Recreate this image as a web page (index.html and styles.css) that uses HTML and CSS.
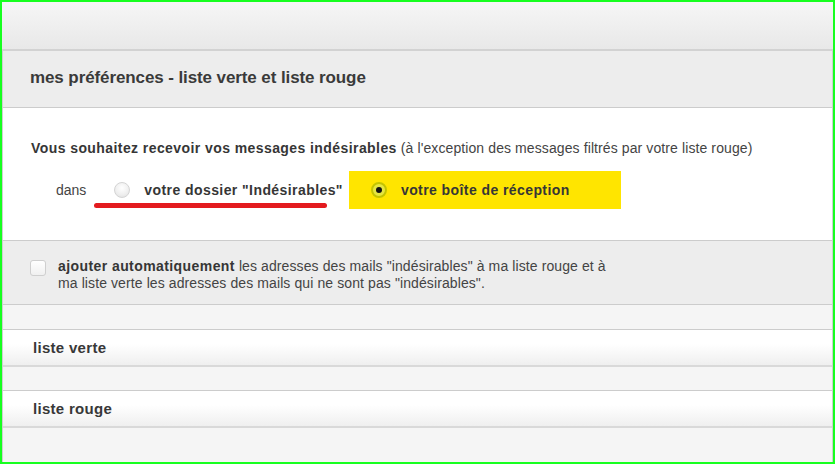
FILE: index.html
```html
<!DOCTYPE html>
<html lang="fr">
<head>
<meta charset="utf-8">
<title>mes préférences</title>
<link rel="stylesheet" href="styles.css">
</head>
<body>
<div class="frame">
  <div class="topbar"></div>
  <div class="panel">
    <div class="panel-title">mes préférences - liste verte et liste rouge</div>
    <div class="choice">
      <p class="question"><b>Vous souhaitez recevoir vos messages indésirables</b> (à l'exception des messages filtrés par votre liste rouge)</p>
      <div class="options">
        <span class="dans">dans</span>
        <label class="opt opt-folder"><span class="radio"></span><b>votre dossier "Indésirables"</b></label>
        <label class="opt opt-inbox"><span class="radio checked"></span><b>votre boîte de réception</b></label>
        <span class="underline"></span>
      </div>
    </div>
    <div class="auto">
      <span class="checkbox"></span>
      <p class="auto-text"><b>ajouter automatiquement</b> les adresses des mails "indésirables" à ma liste rouge et à ma liste verte les adresses des mails qui ne sont pas "indésirables".</p>
    </div>
    <div class="strip"></div>
    <div class="list-head">liste verte</div>
    <div class="strip short"></div>
    <div class="list-head">liste rouge</div>
    <div class="strip last"></div>
  </div>
</div>
</body>
</html>
```
FILE: styles.css
```css
html, body {
  margin: 0;
  padding: 0;
}
body {
  font-family: "Liberation Sans", Arial, sans-serif;
  color: #404040;
  background: #ffffff;
}
.frame {
  width: 835px;
  height: 464px;
  box-sizing: border-box;
  border: 2px solid #17ff1f;
  display: flex;
  flex-direction: column;
  overflow: hidden;
}
.topbar {
  height: 47px;
  flex: none;
  background: linear-gradient(#f6f6f6, #e8e8e8);
  border-bottom: 2px solid #d2d2d2;
}
.panel {
  flex: 1;
  display: flex;
  flex-direction: column;
  border-left: 1px solid #cfcfcf;
  border-right: 1px solid #cfcfcf;
}
.panel-title {
  height: 57px;
  flex: none;
  box-sizing: border-box;
  background: #ededed;
  border-bottom: 1px solid #cccccc;
  padding: 0 0 2px 27px;
  display: flex;
  align-items: center;
  font-size: 17px;
  font-weight: bold;
  color: #3a3a3a;
  letter-spacing: -0.1px;
}
.choice {
  background: #ffffff;
  padding: 31px 0 31px 28px;
  flex: none;
}
.question {
  margin: 0;
  font-size: 14px;
  line-height: 18px;
  color: #444;
  letter-spacing: 0.1px;
}
.question b,
.opt b,
.auto-text b {
  letter-spacing: 0.42px;
  color: #363636;
}
.options {
  position: relative;
  margin-top: 14px;
  height: 38px;
  display: flex;
  align-items: center;
  font-size: 14px;
}
.dans {
  margin-left: 25px;
  color: #444;
}
.opt {
  display: flex;
  align-items: center;
  height: 38px;
  color: #333;
}
.opt-folder {
  margin-left: 28px;
}
.opt-folder .radio {
  margin-right: 14px;
}
.opt-inbox {
  margin-left: 6px;
  background: #ffe500;
  width: 272px;
  box-sizing: border-box;
  padding-left: 22px;
}
.opt-inbox .radio {
  margin-right: 14px;
}
.radio {
  width: 16px;
  height: 16px;
  border-radius: 50%;
  box-sizing: border-box;
  border: 1px solid #d4d4d4;
  background: radial-gradient(circle at 50% 35%, #ffffff 0%, #eeeeee 60%, #dddddd 100%);
  flex: none;
  position: relative;
}
.radio.checked {
  border: 2px solid #c4c400;
  background: #e6e640;
}
.radio.checked::after {
  content: "";
  position: absolute;
  left: 3px;
  top: 3px;
  width: 6px;
  height: 6px;
  border-radius: 50%;
  background: #111;
}
.underline {
  position: absolute;
  left: 63px;
  top: 32px;
  width: 233px;
  height: 5px;
  border-radius: 3px;
  background: #e31b1f;
}
.auto {
  flex: none;
  height: 65px;
  box-sizing: border-box;
  background: #ededed;
  border-top: 1px solid #cccccc;
  border-bottom: 1px solid #cccccc;
  display: flex;
  align-items: flex-start;
  padding: 17px 0 0 27px;
}
.checkbox {
  width: 16px;
  height: 16px;
  box-sizing: border-box;
  border: 1px solid #cfcfcf;
  border-radius: 3px;
  background: linear-gradient(#ffffff, #f0f0f0);
  margin-top: 2px;
  flex: none;
}
.auto-text {
  margin: 0 0 0 12px;
  width: 560px;
  font-size: 14px;
  line-height: 17px;
  color: #444;
  letter-spacing: 0.1px;
}
.strip {
  flex: none;
  height: 24px;
  background: #f5f5f5;
  border-bottom: 1px solid #cccccc;
}
.strip.short {
  height: 23px;
}
.strip.last {
  flex: 1;
  border-bottom: none;
}
.list-head {
  flex: none;
  height: 37px;
  box-sizing: border-box;
  background: linear-gradient(#ffffff 40%, #efefef);
  border-bottom: 2px solid #d9d9d9;
  padding-left: 30px;
  display: flex;
  align-items: center;
  font-size: 15px;
  font-weight: bold;
  color: #383838;
  letter-spacing: 0.3px;
}
```
